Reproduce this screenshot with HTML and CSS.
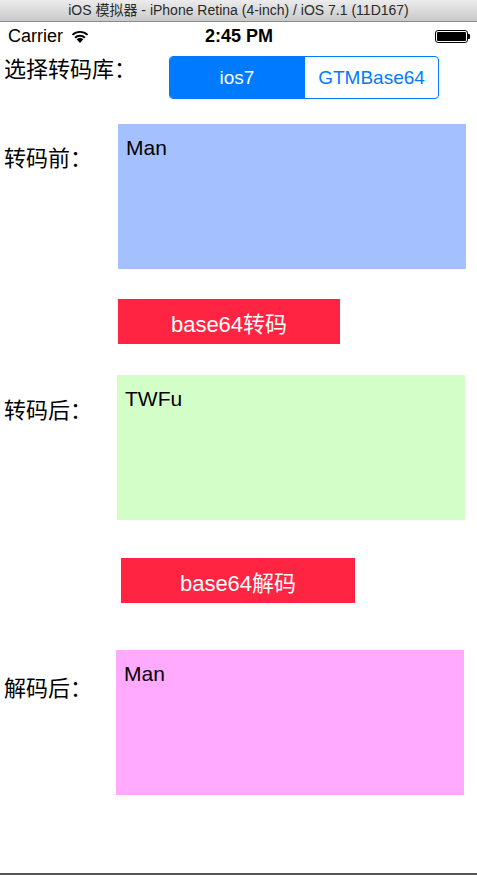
FILE: index.html
```html
<!DOCTYPE html>
<html lang="zh-CN">
<head>
  <meta charset="UTF-8" />
  <title>iOS 模拟器 - Base64</title>
  <meta name="viewport" content="width=device-width, initial-scale=1.0">
  <link rel="stylesheet" href="styles.css">
</head>
<body>
  <div class="screen">
    <div class="titlebar">iOS 模拟器 - iPhone Retina (4-inch) / iOS 7.1 (11D167)</div>

    <!-- 状态栏 -->
    <div class="statusbar">
      <div class="status-left">
        <span>Carrier</span>
        <svg class="wifi" width="18" height="13" viewBox="0 0 18 13">
          <path d="M9 13 L5.6 9.3 A5 5 0 0 1 12.4 9.3 Z" fill="#000"/>
          <path d="M3.4 7 A8 8 0 0 1 14.6 7 L13.3 8.4 A6.2 6.2 0 0 0 4.7 8.4 Z" fill="#000"/>
          <path d="M0.8 4.2 A11.8 11.8 0 0 1 17.2 4.2 L15.9 5.6 A10 10 0 0 0 2.1 5.6 Z" fill="#000"/>
        </svg>
      </div>
      <div class="status-time">2:45 PM</div>
      <div class="status-right">
        <div class="battery"><div class="battery-fill"></div></div>
        <div class="battery-nub"></div>
      </div>
    </div>

    <div class="content">
      <div class="row-lib">
        <div class="label">选择转码库：</div>
        <div class="segmented">
          <div class="segment active">ios7</div>
          <div class="segment">GTMBase64</div>
        </div>
      </div>

      <div class="row row-before">
        <div class="label">转码前：</div>
        <div class="textbox box-blue">Man</div>
      </div>

      <button class="action btn-encode">base64转码</button>

      <div class="row row-after">
        <div class="label">转码后：</div>
        <div class="textbox box-green">TWFu</div>
      </div>

      <button class="action btn-decode">base64解码</button>

      <div class="row row-decoded">
        <div class="label">解码后：</div>
        <div class="textbox box-pink">Man</div>
      </div>
    </div>
  </div>
</body>
</html>
```

FILE: styles.css
```css
body {
  margin: 0;
  font-family: "Liberation Sans", "Noto Sans CJK SC", sans-serif;
  color: #000;
  background: #fff;
}

.screen {
  width: 477px;
  height: 875px;
  box-sizing: border-box;
  border-bottom: 2px solid #555;
  overflow: hidden;
}

.titlebar {
  height: 21px;
  line-height: 21px;
  text-align: center;
  font-size: 14px;
  color: #2a2a2a;
  background: linear-gradient(#ececec, #c9c9c9);
  border-bottom: 1px solid #8a8a8a;
}

.statusbar {
  height: 28px;
  display: flex;
  align-items: center;
  justify-content: space-between;
  padding: 0 7px 0 8px;
  font-size: 18px;
}

.status-left {
  display: flex;
  align-items: center;
  gap: 8px;
  width: 120px;
}

.status-time {
  font-weight: bold;
}

.status-right {
  width: 120px;
  display: flex;
  justify-content: flex-end;
  align-items: center;
}

.battery {
  width: 33px;
  height: 13px;
  border: 1px solid #000;
  border-radius: 3px;
  padding: 1px;
  box-sizing: border-box;
}

.battery-fill {
  width: 100%;
  height: 100%;
  background: #000;
  border-radius: 1px;
}

.battery-nub {
  width: 2px;
  height: 5px;
  background: #000;
  border-radius: 0 1px 1px 0;
}

.label {
  font-size: 22px;
  line-height: 26px;
  white-space: nowrap;
}

.row-lib {
  display: flex;
  align-items: flex-start;
  margin-top: 6px;
  padding-left: 4px;
}

.row-lib .label {
  margin-top: 1px;
}

.segmented {
  display: flex;
  width: 270px;
  height: 43px;
  margin-left: 33px;
  border: 1px solid #007aff;
  border-radius: 4px;
  box-sizing: border-box;
  overflow: hidden;
}

.segment {
  flex: 1;
  display: flex;
  align-items: center;
  justify-content: center;
  font-size: 19px;
  color: #007aff;
}

.segment.active {
  flex: 0 0 134px;
  background: #007aff;
  color: #fff;
  border-right: 1px solid #007aff;
}

.row {
  display: flex;
  align-items: flex-start;
  padding-left: 4px;
}

.row .label {
  flex: 0 0 auto;
}

.textbox {
  width: 348px;
  height: 145px;
  box-sizing: border-box;
  padding: 12px 8px;
  font-size: 21px;
  line-height: 24px;
}

.row-before {
  margin-top: 25px;
}

.row-before .label {
  width: 114px;
  margin-top: 22px;
}

.box-blue {
  background: #a4c0ff;
}

.row-after {
  margin-top: 31px;
}

.row-after .label {
  width: 113px;
  margin-top: 23px;
}

.box-green {
  background: #d4fec8;
}

.row-decoded {
  margin-top: 47px;
}

.row-decoded .label {
  width: 112px;
  margin-top: 26px;
}

.box-pink {
  background: #ffaaff;
}

.action {
  display: block;
  height: 45px;
  border: none;
  padding: 0;
  background: #ff2442;
  color: #fff;
  font-family: "Liberation Sans", "Noto Sans CJK SC", sans-serif;
  font-size: 22px;
}

.btn-encode {
  width: 222px;
  margin: 30px 0 0 118px;
}

.btn-decode {
  width: 234px;
  margin: 38px 0 0 121px;
}
```
